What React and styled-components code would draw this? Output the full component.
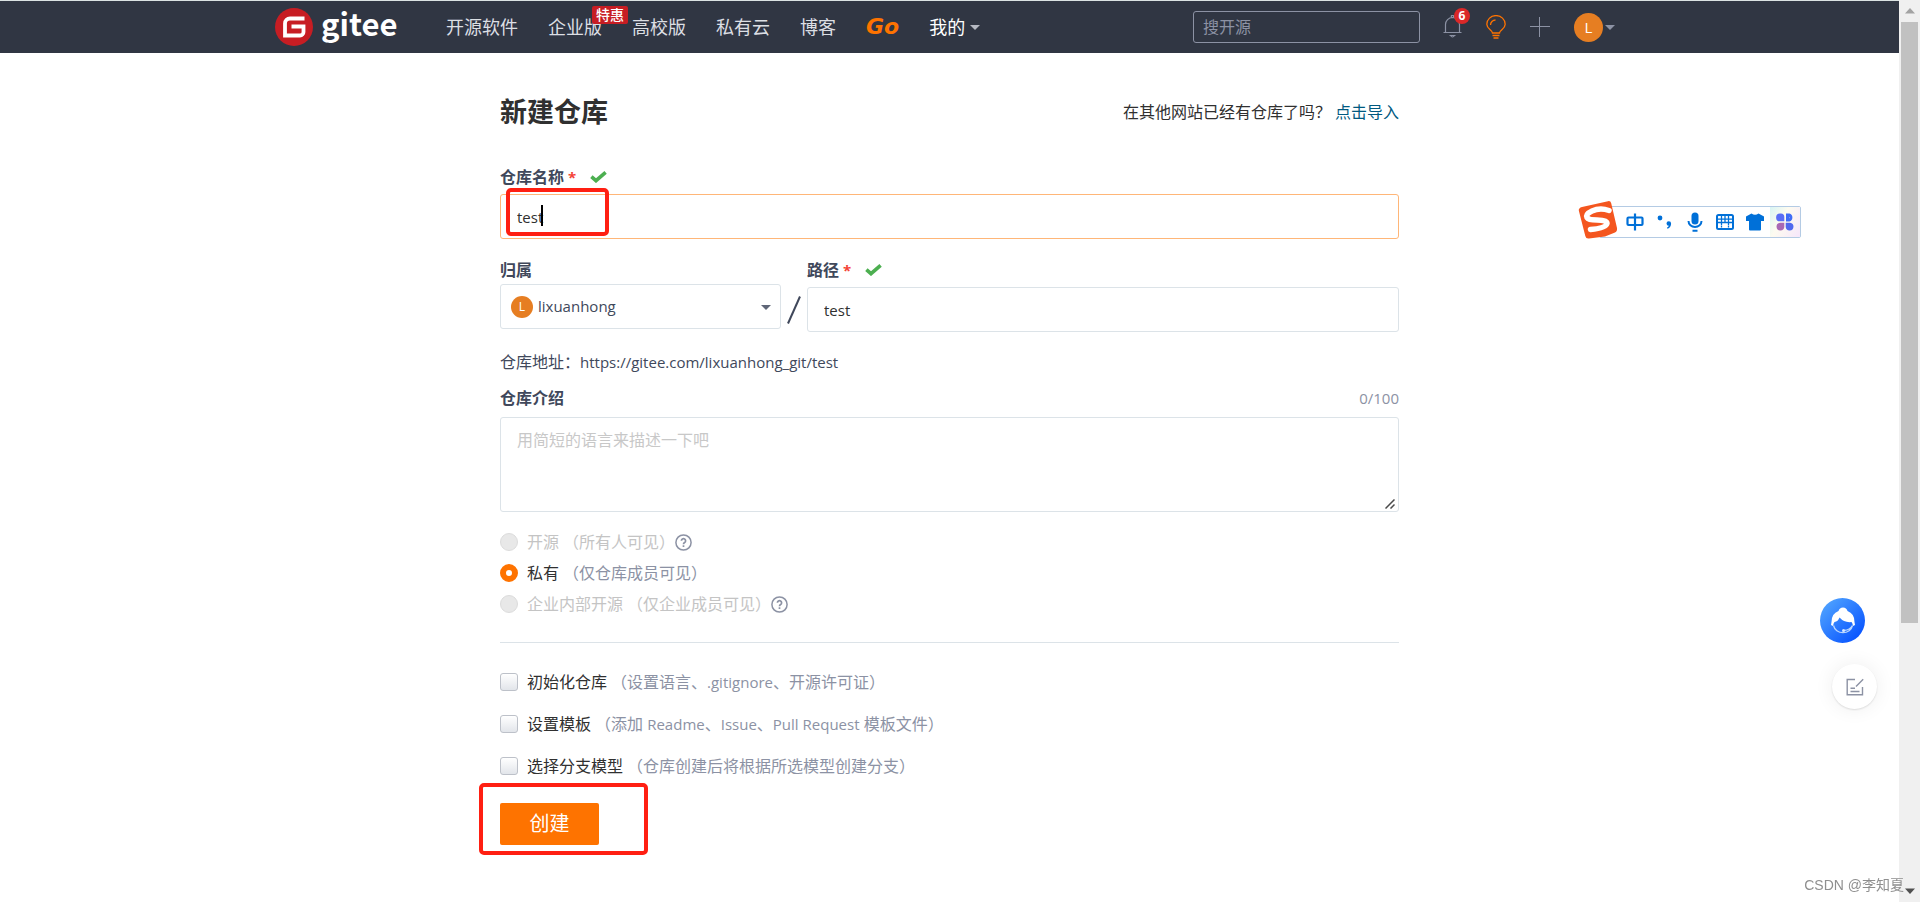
import React, { useState } from 'react';
import styled, { createGlobalStyle, css } from 'styled-components';

const NAVY = '#303643';
const SLATE = '#40485b';
const GRAY = '#8c92a4';
const BORDER = '#dce3e8';
const ORANGE = '#fe7300';
const AVATAR = '#e67e22';
const MARK_RED = '#ff1f12';
const IME_BLUE = '#0070d8';

const GlobalStyle = createGlobalStyle`
  * {
    box-sizing: border-box;
  }

  body {
    margin: 0;
    background: #fff;
    color: ${SLATE};
    font-family: 'Open Sans', 'Noto Sans CJK SC', sans-serif;
    font-size: 16px;
    line-height: 24px;
  }

  input, select, textarea, button {
    font: inherit;
    margin: 0;
  }

  a {
    text-decoration: none;
  }
`;

const Page = styled.div`
  display: flex;
  height: 100vh;
  overflow: hidden;
`;

const Content = styled.div`
  flex: 1;
  min-width: 0;
`;

/* ---------- top bar ---------- */

const TopBar = styled.header`
  background: ${NAVY};
  border-top: 1px solid #dbe3e3;
`;

const TopBarInner = styled.div`
  display: flex;
  align-items: center;
  max-width: 1349px;
  height: 52px;
  margin: 0 auto;
`;

const Brand = styled.a`
  display: flex;
  align-items: center;
  gap: 8px;
  width: 171px;
  color: #fff;
  font-family: 'Noto Sans CJK SC', sans-serif;
  font-size: 31px;
  font-weight: 700;
  line-height: 38px;
`;

const BrandName = styled.span`
  padding-bottom: 8px;
`;

const Nav = styled.nav`
  display: flex;
  align-items: center;
  gap: 30px;
  flex: 1;
  font-size: 18px;
`;

const NavLink = styled.a`
  position: relative;
  display: flex;
  align-items: center;
  gap: 5px;
  color: ${props => (props.$active ? '#fff' : '#dcdfe4')};
`;

const GoLink = styled(NavLink)`
  color: ${ORANGE};
  font-family: 'DejaVu Sans', sans-serif;
  font-size: 22px;
  font-style: italic;
  font-weight: 700;
`;

const Promo = styled.span`
  position: absolute;
  top: -9px;
  right: -26px;
  width: 36px;
  border-radius: 2px;
  background: #c71d23;
  color: #fff;
  font-size: 14px;
  font-weight: 500;
  line-height: 18px;
  text-align: center;
`;

const Caret = styled.span`
  border: 5px solid transparent;
  border-top-color: ${props => props.$color || GRAY};
  border-bottom-width: 0;
`;

const Search = styled.input`
  width: 227px;
  height: 32px;
  padding: 0 9px;
  border: 1px solid ${GRAY};
  border-radius: 3px;
  background: transparent;
  color: #fff;

  &::placeholder {
    color: ${GRAY};
    opacity: 1;
  }
`;

const Tools = styled.div`
  display: flex;
  align-items: center;
  gap: 24px;
  width: 204px;
  padding-left: 23px;
`;

const ToolButton = styled.button`
  position: relative;
  display: flex;
  align-items: center;
  gap: 2px;
  padding: 0;
  border: 0;
  background: none;
  color: ${GRAY};
`;

const Count = styled.span`
  position: absolute;
  top: -7px;
  right: -8px;
  width: 16px;
  height: 16px;
  border-radius: 50%;
  background: #db2828;
  color: #fff;
  font-size: 12px;
  font-weight: 700;
  line-height: 16px;
  text-align: center;
`;

const Avatar = styled.span`
  width: ${props => props.$size}px;
  height: ${props => props.$size}px;
  border-radius: 50%;
  background: ${AVATAR};
  color: #fff;
  font-size: ${props => (props.$size > 24 ? 15 : 12)}px;
  line-height: ${props => props.$size}px;
  text-align: center;
`;

/* ---------- form ---------- */

const Form = styled.form`
  max-width: 899px;
  margin: 0 auto;
  padding-top: 39px;
`;

const TitleRow = styled.div`
  display: flex;
  align-items: center;
  justify-content: space-between;
  height: 40px;
  margin-bottom: 33px;
  color: #303030;
`;

const Title = styled.h1`
  margin: 0;
  font-size: 27px;
  font-weight: 700;
`;

const ImportLink = styled.a`
  margin-left: 4px;
  color: #005980;
`;

const LabelRow = styled.div`
  display: flex;
  align-items: center;
  justify-content: ${props => (props.$spread ? 'space-between' : 'flex-start')};
  height: 24px;
  margin-bottom: ${props => props.$gap || 5}px;
`;

const Label = styled.label`
  font-weight: 700;
`;

const Required = styled.span`
  margin: 0 14px 0 4px;
  color: #f44336;
  font-size: 15px;
  font-weight: 700;
`;

const Counter = styled.span`
  color: ${GRAY};
  font-size: 15px;
`;

const FieldWrap = styled.div`
  position: relative;
`;

const fieldBox = css`
  display: block;
  width: 100%;
  border: 1px solid ${BORDER};
  border-radius: 3px;
  outline: none;
  background: #fff;
`;

const TextInput = styled.input`
  ${fieldBox}
  height: 45px;
  padding: 0 16px;
  border-color: ${props => (props.$focused ? '#ffb678' : BORDER)};
  color: #303030;
  font-size: 15px;
  caret-color: transparent;
`;

const TextCursor = styled.span`
  position: absolute;
  top: 11px;
  left: 41px;
  width: 2px;
  height: 21px;
  background: #000;
`;

const OwnerRow = styled.div`
  display: flex;
  margin: 19px 0 18px;
`;

const OwnerField = styled.div`
  flex: 0 0 281px;
`;

const PathField = styled.div`
  flex: 1;
`;

const Slash = styled.svg`
  flex: none;
  align-self: flex-end;
  width: 14px;
  height: 28px;
  margin: 0 6px 8px;
  stroke: ${SLATE};
`;

const OwnerAvatar = styled(Avatar)`
  position: absolute;
  top: 12px;
  left: 11px;
`;

const OwnerSelect = styled.select`
  ${fieldBox}
  height: 45px;
  padding: 0 36px 2px 37px;
  appearance: none;
  color: ${SLATE};
  font-size: 15px;
`;

const OwnerCaret = styled(Caret)`
  position: absolute;
  top: 21px;
  right: 10px;
`;

const Address = styled.p`
  margin: 0 0 12px;
`;

const Latin = styled.span`
  font-size: 15px;
`;

const Description = styled.textarea`
  ${fieldBox}
  height: 95px;
  padding: 10px 16px;
  resize: vertical;

  &::placeholder {
    color: #c8c8c8;
    opacity: 1;
  }

  &::-webkit-resizer {
    background: transparent;
  }
`;

const ResizeGrip = styled.svg`
  position: absolute;
  right: 4px;
  bottom: 3px;
  width: 10px;
  height: 10px;
  stroke: #4a4a4a;
  pointer-events: none;
`;

const Choices = styled.div`
  display: flex;
  flex-direction: column;
  gap: ${props => props.$gap}px;
  margin: ${props => props.$margin};
`;

const Choice = styled.div`
  display: flex;
  align-items: center;
  height: 24px;
  color: ${props => (props.$disabled ? '#c4c4c4' : '#303030')};
`;

const ChoiceLabel = styled.label`
  display: flex;
  align-items: center;
  gap: 4px;
  white-space: pre;
`;

const Hint = styled.span`
  color: ${props => (props.$disabled ? '#c4c4c4' : GRAY)};
`;

const Radio = styled.input`
  width: 18px;
  height: 18px;
  margin-right: 5px;
  appearance: none;
  border: 1px solid #dcdcdc;
  border-radius: 50%;
  background: #e8e8e8;

  &:checked {
    border: 6px solid ${ORANGE};
    background: #fff;
  }
`;

const Checkbox = styled.input`
  width: 18px;
  height: 18px;
  margin-right: 5px;
  appearance: none;
  border: 1px solid #bdc1c9;
  border-radius: 3px;
  background: linear-gradient(#fff, #e2e5ea);

  &:checked {
    background: ${ORANGE};
  }
`;

const HelpIcon = styled.svg`
  width: 17px;
  height: 17px;
`;

const Divider = styled.hr`
  height: 1px;
  margin: 0;
  border: 0;
  background: ${BORDER};
`;

const SubmitWrap = styled.div`
  position: relative;
  width: 99px;
`;

const Submit = styled.button`
  display: block;
  width: 100%;
  height: 42px;
  padding: 0;
  border: 0;
  border-radius: 2px;
  background: ${ORANGE};
  color: #fff;
  font-size: 20px;
`;

const Mark = styled.span`
  position: absolute;
  border: 4px solid ${MARK_RED};
  border-radius: 5px;
  pointer-events: none;
`;

const NameMark = styled(Mark)`
  top: -6px;
  left: 6px;
  width: 103px;
  height: 48px;
`;

const SubmitMark = styled(Mark)`
  top: -20px;
  left: -21px;
  width: 169px;
  height: 72px;
`;

/* ---------- things floating over the page ---------- */

const ImeBar = styled.div`
  position: fixed;
  top: 206px;
  right: 119px;
  display: flex;
  align-items: center;
  height: 32px;
  padding-left: 20px;
  border: 1px solid #b4cbe4;
  border-radius: 2px;
  background: #fff;
`;

const ImeLogo = styled.svg`
  position: absolute;
  top: -7px;
  left: -22px;
  width: 40px;
  height: 40px;
`;

const ImeKey = styled.button`
  display: flex;
  align-items: center;
  justify-content: center;
  width: 30px;
  height: 30px;
  padding: 0;
  border: 0;
  background: ${props => (props.$tinted ? 'linear-gradient(120deg, #d8f5f4, #fdfbf0 40%, #f6e6fb)' : 'none')};
`;

const Floating = styled.button`
  position: fixed;
  display: flex;
  align-items: center;
  justify-content: center;
  width: 45px;
  height: 45px;
  padding: 0;
  border: 0;
  border-radius: 50%;
`;

const SupportButton = styled(Floating)`
  right: 55px;
  bottom: 259px;
  background: linear-gradient(135deg, #4a9dff 15%, #0b57ff 85%);
`;

const FeedbackButton = styled(Floating)`
  right: 43px;
  bottom: 193px;
  background: #fff;
  box-shadow: 0 1px 2px rgba(0, 0, 0, 0.12), 0 0 20px rgba(0, 0, 0, 0.07);
`;

const Watermark = styled.span`
  position: fixed;
  right: 16px;
  bottom: 5px;
  color: #8f8f8f;
  font-family: 'Liberation Sans', 'Noto Sans CJK SC', sans-serif;
  font-size: 14px;
`;

const ScrollBar = styled.div`
  display: flex;
  flex-direction: column;
  align-items: center;
  flex: 0 0 21px;
  background: #f0f0f0;
`;

const ScrollArrow = styled.svg`
  flex: none;
  width: 12px;
  height: 6px;
  margin: 8px 0;
  fill: ${props => props.$color};
`;

const ScrollTrack = styled.div`
  flex: 1;
  width: 17px;
`;

const ScrollThumb = styled.div`
  height: 70%;
  background: #c1c1c1;
`;

const LogoMark = () => (
	<svg width="38" height="38" viewBox="0 0 38 38">
		<circle cx="19" cy="19" r="19" fill="#c71d23" />
		<path d="M29.500 10.500H15a5 5 0 0 0-5 5V27.500H25a3.500 3.500 0 0 0 3.500-3.500V18.500H16.500" fill="none" stroke="#fff" strokeWidth="3.800" />
	</svg>
);

const BellIcon = () => (
	<svg width="19" height="24" viewBox="0 0 19 24" fill="none" stroke={GRAY} strokeWidth="1.2">
		<path d="M0.500 17.500H18.500M2.500 17.500V9.500a7 7 0 0 1 14 0V17.500" />
		<circle cx="9.500" cy="1.500" r="1.200" />
		<path d="M6.500 20.500h6M7.500 20.500q2 3 4 0" />
	</svg>
);

const BulbIcon = () => (
	<svg width="20" height="24" viewBox="0 0 20 24" fill="none" stroke={ORANGE} strokeWidth="1.300">
		<path d="M6.500 18C6.500 15 0.800 14 0.800 9.300a9.200 8.700 0 0 1 18.400 0C19.200 14 13.500 15 13.500 18Z" />
		<path d="M4.500 10a5 5 0 0 1 5-5M6.500 20.500h7M7.500 23h5" />
	</svg>
);

const CheckIcon = () => (
	<svg width="17" height="12" viewBox="0 0 17 12" fill="none" stroke="#4caf50" strokeWidth="3.600">
		<path d="M1.400 5.600L6 9.700L15.600 1.400" />
	</svg>
);

const Help = () => (
	<HelpIcon viewBox="0 0 17 17" fill="none" stroke={GRAY} strokeWidth="1.500">
		<circle cx="8.500" cy="8.500" r="7.600" />
		<path d="M6.400 6.800a2.100 2.100 0 1 1 3.200 1.800q-1.100.6-1.100 1.700M8.500 11.300v1.700" strokeWidth="1.700" />
	</HelpIcon>
);

const ImeKeys = () => (
	<>
		<ImeKey type="button" aria-label="中">
			<svg width="18" height="18" viewBox="0 0 18 18" fill="none" stroke={IME_BLUE} strokeWidth="2.200">
				<rect x="1.500" y="4.500" width="15" height="7.500" rx="1" />
				<path d="M9 0.500V17.500" />
			</svg>
		</ImeKey>
		<ImeKey type="button" aria-label="标点">
			<svg width="16" height="18" viewBox="0 0 16 18" fill={IME_BLUE}>
				<circle cx="3" cy="5" r="2.400" />
				<path d="M9.500 10.500a2.300 2.300 0 1 1 4.600 0q0 4-3.600 5.300l-.6-1.100q1.700-.8 1.900-2a2.300 2.300 0 0 1-2.300-2.200Z" />
			</svg>
		</ImeKey>
		<ImeKey type="button" aria-label="语音">
			<svg width="16" height="20" viewBox="0 0 16 20" fill="none" stroke={IME_BLUE} strokeWidth="2">
				<rect x="4.500" y="0.500" width="7" height="12" rx="3.500" fill={IME_BLUE} stroke="none" />
				<path d="M1.500 9a6.500 6 0 0 0 13 0M5.500 18.800h5" />
			</svg>
		</ImeKey>
		<ImeKey type="button" aria-label="键盘">
			<svg width="18" height="16" viewBox="0 0 18 16" fill="none" stroke={IME_BLUE}>
				<rect x="1" y="1" width="16" height="14" rx="1.500" strokeWidth="2" />
				<path d="M5.500 2v9M9 2v6M12.500 2v9M2 5.200h14M2 8.500h14M5.500 11.500v2M12.500 11.500v2" strokeWidth="1.300" />
			</svg>
		</ImeKey>
		<ImeKey type="button" aria-label="皮肤">
			<svg width="20" height="18" viewBox="0 0 20 18" fill={IME_BLUE}>
				<path d="M1 3.500L6.500 0.500q3.500 2.500 7 0L19 3.500V8h-3v8.500a1 1 0 0 1-1 1H5a1 1 0 0 1-1-1V8H1Z" />
			</svg>
		</ImeKey>
		<ImeKey type="button" aria-label="工具箱" $tinted>
			<svg width="18" height="18" viewBox="0 0 18 18">
				<path d="M4.200 0.500H5a3.500 3.500 0 0 1 3.300 3.500V8.300H4a3.900 3.900 0 0 1 0-7.800Z" fill="#5a6df5" />
				<path d="M11.500 2h1.500a2.600 2.600 0 0 1 0 5H11.500Z" fill="none" stroke="#3f6cf6" strokeWidth="3" />
				<path d="M8.300 9.700V14a3.900 3.900 0 1 1-4.300-4.300Z" fill="#a868b4" />
				<path d="M9.700 9.700H14a3.900 3.900 0 1 1-4.300 4.300Z" fill="#5168ee" />
			</svg>
		</ImeKey>
	</>
);

const visibilities = [
	{ id: 'public', name: '开源', hint: '（所有人可见）', disabled: true },
	{ id: 'private', name: '私有', hint: '（仅仓库成员可见）' },
	{ id: 'internal', name: '企业内部开源', hint: '（仅企业成员可见）', disabled: true },
];

const options = [
	{ id: 'init', name: '初始化仓库', hint: <>（设置语言、<Latin>.gitignore</Latin>、开源许可证）</> },
	{ id: 'template', name: '设置模板', hint: <>（添加 <Latin>Readme</Latin>、<Latin>Issue</Latin>、<Latin>Pull Request</Latin> 模板文件）</> },
	{ id: 'branch', name: '选择分支模型', hint: '（仓库创建后将根据所选模型创建分支）' },
];

const Header = () => (
	<TopBar>
		<TopBarInner>
			<Brand href="#">
				<LogoMark />
				<BrandName>gitee</BrandName>
			</Brand>
			<Nav>
				<NavLink href="#">开源软件</NavLink>
				<NavLink href="#">企业版<Promo>特惠</Promo></NavLink>
				<NavLink href="#">高校版</NavLink>
				<NavLink href="#">私有云</NavLink>
				<NavLink href="#">博客</NavLink>
				<GoLink href="#">Go</GoLink>
				<NavLink href="#" $active>我的<Caret $color="#b5b9c2" /></NavLink>
			</Nav>
			<Search type="search" placeholder="搜开源" aria-label="搜开源" />
			<Tools>
				<ToolButton aria-label="通知"><BellIcon /><Count>6</Count></ToolButton>
				<ToolButton aria-label="动态"><BulbIcon /></ToolButton>
				<ToolButton aria-label="新建">
					<svg width="20" height="20" viewBox="0 0 20 20" stroke={GRAY}>
						<path d="M0 9.500H20M9.500 0V20" />
					</svg>
				</ToolButton>
				<ToolButton aria-label="账号">
					<Avatar $size={29}>L</Avatar>
					<Caret />
				</ToolButton>
			</Tools>
		</TopBarInner>
	</TopBar>
);

const RepoForm = () => {
	const [name, setName] = useState('test');
	const [path, setPath] = useState('test');
	const [description, setDescription] = useState('');
	const [visibility, setVisibility] = useState('private');

	return (
		<Form onSubmit={e => e.preventDefault()}>
			<TitleRow>
				<Title>新建仓库</Title>
				<span>在其他网站已经有仓库了吗？<ImportLink href="#">点击导入</ImportLink></span>
			</TitleRow>

			<LabelRow>
				<Label htmlFor="name">仓库名称</Label>
				<Required>*</Required>
				<CheckIcon />
			</LabelRow>
			<FieldWrap>
				<TextInput id="name" $focused value={name} onChange={e => setName(e.target.value)} />
				<TextCursor />
				<NameMark />
			</FieldWrap>

			<OwnerRow>
				<OwnerField>
					<LabelRow $gap={2}>
						<Label htmlFor="owner">归属</Label>
					</LabelRow>
					<FieldWrap>
						<OwnerSelect id="owner">
							<option>lixuanhong</option>
						</OwnerSelect>
						<OwnerAvatar $size={22}>L</OwnerAvatar>
						<OwnerCaret $color="#5f6677" />
					</FieldWrap>
				</OwnerField>
				<Slash viewBox="0 0 14 28" strokeWidth="2">
					<path d="M1 27.500L13 0.500" />
				</Slash>
				<PathField>
					<LabelRow>
						<Label htmlFor="path">路径</Label>
						<Required>*</Required>
						<CheckIcon />
					</LabelRow>
					<TextInput id="path" value={path} onChange={e => setPath(e.target.value)} />
				</PathField>
			</OwnerRow>

			<Address>仓库地址：<Latin>https://gitee.com/lixuanhong_git/test</Latin></Address>

			<LabelRow $spread $gap={7}>
				<Label htmlFor="description">仓库介绍</Label>
				<Counter>{description.length}/100</Counter>
			</LabelRow>
			<FieldWrap>
				<Description
					id="description"
					placeholder="用简短的语言来描述一下吧"
					value={description}
					onChange={e => setDescription(e.target.value)}
				/>
				<ResizeGrip viewBox="0 0 10 10" strokeWidth="1.500">
					<path d="M0.500 9.500L9.500 0.500M5.500 9.500L9.500 5.500" />
				</ResizeGrip>
			</FieldWrap>

			<Choices $gap={7} $margin="18px 0 26px">
				{visibilities.map(({ id, name, hint, disabled }) => (
					<Choice key={id} $disabled={disabled}>
						<ChoiceLabel>
							<Radio
								type="radio"
								name="visibility"
								checked={visibility === id}
								disabled={disabled}
								onChange={() => setVisibility(id)}
							/>
							{name}
							<Hint $disabled={disabled}>{hint}</Hint>
						</ChoiceLabel>
						{disabled && <Help />}
					</Choice>
				))}
			</Choices>
			<Divider />
			<Choices $gap={18} $margin="27px 0 25px">
				{options.map(({ id, name, hint }) => (
					<Choice key={id}>
						<ChoiceLabel>
							<Checkbox type="checkbox" name={id} />
							{name}
							<Hint>{hint}</Hint>
						</ChoiceLabel>
					</Choice>
				))}
			</Choices>

			<SubmitWrap>
				<Submit type="submit">创建</Submit>
				<SubmitMark />
			</SubmitWrap>
		</Form>
	);
};

const App = () => (
	<Page>
		<GlobalStyle />
		<Content>
			<Header />
			<main>
				<RepoForm />
			</main>
		</Content>
		<ScrollBar>
			<ScrollArrow viewBox="0 0 12 6" $color="#a3a3a3"><path d="M6 0L11 5.500H1Z" /></ScrollArrow>
			<ScrollTrack>
				<ScrollThumb />
			</ScrollTrack>
			<ScrollArrow viewBox="0 0 12 6" $color="#505050"><path d="M1 0.500H11L6 6Z" /></ScrollArrow>
		</ScrollBar>

		<ImeBar>
			<ImeLogo viewBox="0 0 40 40">
				<path d="M4 7L30 1.200Q32.500 0.600 33.200 3.200L39 28Q39.500 31 37 32.500L27 36.500L11 38.500Q8 39 7.300 36L0.800 10.500Q0.500 8 4 7Z" fill="#f4561f" />
				<path d="M31 10.500Q22 7.500 14 11Q7.500 14 9 17.500Q10.500 20 19 20Q29 20 29 23.500Q28 28 12.500 29.500" fill="none" stroke="#fff" strokeWidth="5.500" strokeLinecap="round" />
			</ImeLogo>
			<ImeKeys />
		</ImeBar>

		<SupportButton aria-label="客服">
			<svg width="26" height="30" viewBox="0 0 26 30">
				<path d="M13 1.500q3.500 0 4.500 3.500q7 2.500 7 11l.5 3l-2 1q-.5-3-1.500-4q-7 1-12-4.500q-1.500 4-5 4.500q-1 1-1.500 4l-2-1l.5-3q0-8.500 7-11q1-3.500 4.500-3.500Z" fill="#fff" />
				<path d="M3.500 19.500a9.700 9 0 0 0 19 0q-2.500 4.500-8.500 5" fill="none" stroke="#b9d6ff" strokeWidth="1.300" />
				<circle cx="13.500" cy="24.500" r="1.500" fill="#d6e7ff" />
			</svg>
		</SupportButton>
		<FeedbackButton aria-label="反馈">
			<svg width="18" height="18" viewBox="0 0 18 18" fill="none" stroke={GRAY} strokeWidth="1.400">
				<path d="M9 1.500H1.200V16.800H16.500V9M10 8.500L17.200 1.200M4.500 10.200h4.500M4.500 13.500h9" />
			</svg>
		</FeedbackButton>
		<Watermark>CSDN @李知夏</Watermark>
	</Page>
);

export default App;
